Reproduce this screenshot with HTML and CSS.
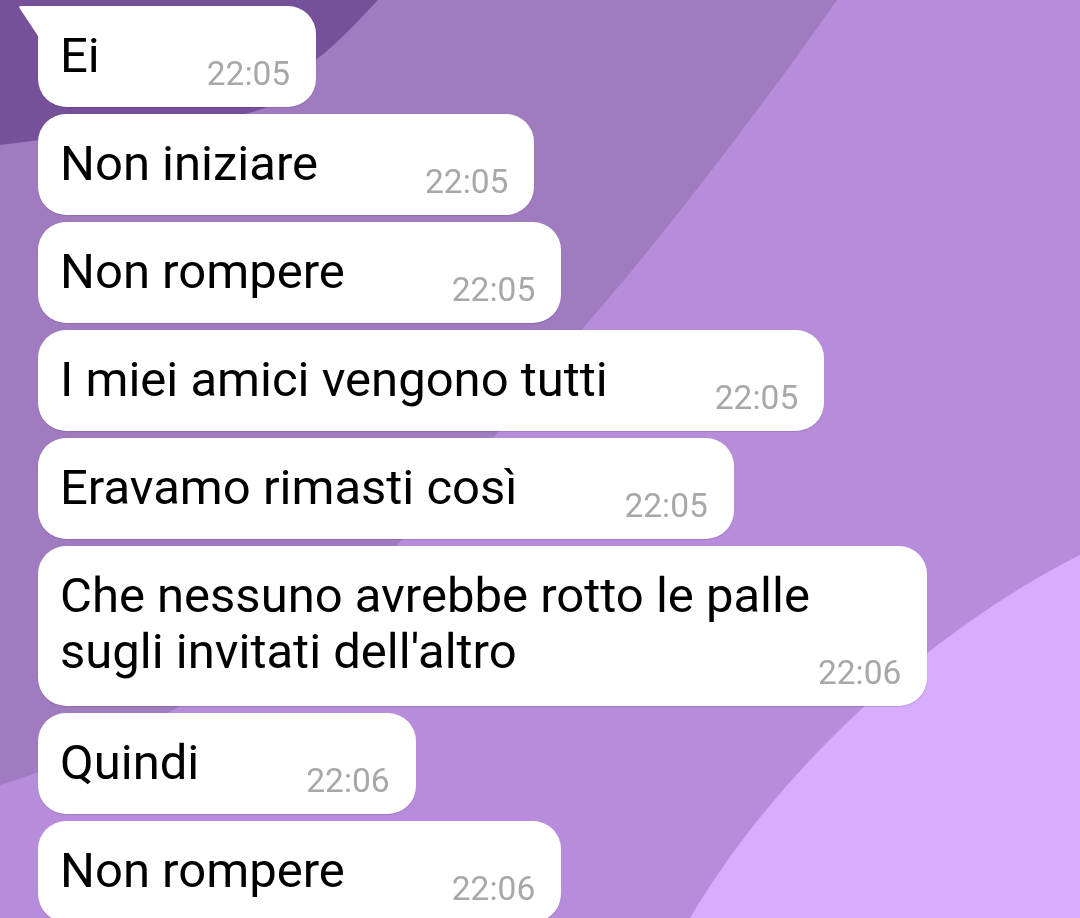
FILE: index.html
```html
<!DOCTYPE html>
<html>

<head>
    <meta name="viewport" content="width=device-width, initial-scale=1">
    <title>Chat</title>

    <link rel="stylesheet" href="styles.css">

</head>

<body>
    <svg class="wallpaper" viewBox="0 0 1080 918" preserveAspectRatio="none">
        <rect width="1080" height="918" fill="#b78ddb" />
        <path d="M0 0 H837 C760 110 660 240 590 320 C540 380 470 470 400 542 C300 640 150 740 0 785 Z" fill="#a17bc0" />
        <path d="M0 0 H378 C350 30 330 50 313 62 C290 100 270 112 220 118 L0 145 Z" fill="#76519a" />
        <path d="M1080 555 C950 620 790 750 690 918 H1080 Z" fill="#d9adfd" />
    </svg>

    <div class="chat">
        <div class="bubble first">
            <svg class="tail" viewBox="0 0 20 30" width="20" height="30">
                <path d="M20 0 H3 Q0 0 1.8 2.6 L20 30 Z" fill="#fff" />
            </svg>
            <span class="text">Ei</span>
            <span class="time">22:05</span>
        </div>
        <div class="bubble">
            <span class="text">Non iniziare</span>
            <span class="time">22:05</span>
        </div>
        <div class="bubble">
            <span class="text">Non rompere</span>
            <span class="time">22:05</span>
        </div>
        <div class="bubble">
            <span class="text">I miei amici vengono tutti</span>
            <span class="time">22:05</span>
        </div>
        <div class="bubble">
            <span class="text">Eravamo rimasti così</span>
            <span class="time">22:05</span>
        </div>
        <div class="bubble long">
            <span class="text">Che nessuno avrebbe rotto le palle<br>sugli invitati dell'altro</span>
            <span class="time">22:06</span>
        </div>
        <div class="bubble">
            <span class="text">Quindi</span>
            <span class="time">22:06</span>
        </div>
        <div class="bubble">
            <span class="text">Non rompere</span>
            <span class="time">22:06</span>
        </div>
    </div>
</body>

</html>
```

FILE: styles.css
```css
html,
body {
    margin: 0;
    height: 100%;
    overflow: hidden;
}

body {
    font-family: Roboto, "Noto Sans", sans-serif;
    background-color: #b78ddb;
}

/* chat wallpaper, sits behind everything */
.wallpaper {
    position: fixed;
    top: 0;
    left: 0;
    width: 100%;
    height: 100%;
    z-index: -1;
}

.chat {
    display: flex;
    flex-direction: column;
    align-items: flex-start;
    gap: 7px;
    padding: 6px 0 0 38px;
}

.bubble {
    position: relative;
    display: flex;
    align-items: flex-end;
    background-color: #fff;
    border-radius: 28px;
    padding: 22px 26px 23px 22px;
    box-shadow: 0 1px 1px rgba(60, 20, 90, 0.18);
}

.bubble.first {
    border-top-left-radius: 0;
}

.tail {
    position: absolute;
    top: 0;
    left: -20px;
}

.text {
    font-size: 49px;
    line-height: 56px;
    color: #000;
    white-space: nowrap;
}

.time {
    font-size: 33.5px;
    line-height: 33px;
    color: #a8a8a8;
    margin-left: 107px;
    margin-bottom: -6px;
}

.bubble.long {
    padding-bottom: 26px;
}

.bubble.long .time {
    margin-left: 8px;
    margin-bottom: -9px;
}
```
